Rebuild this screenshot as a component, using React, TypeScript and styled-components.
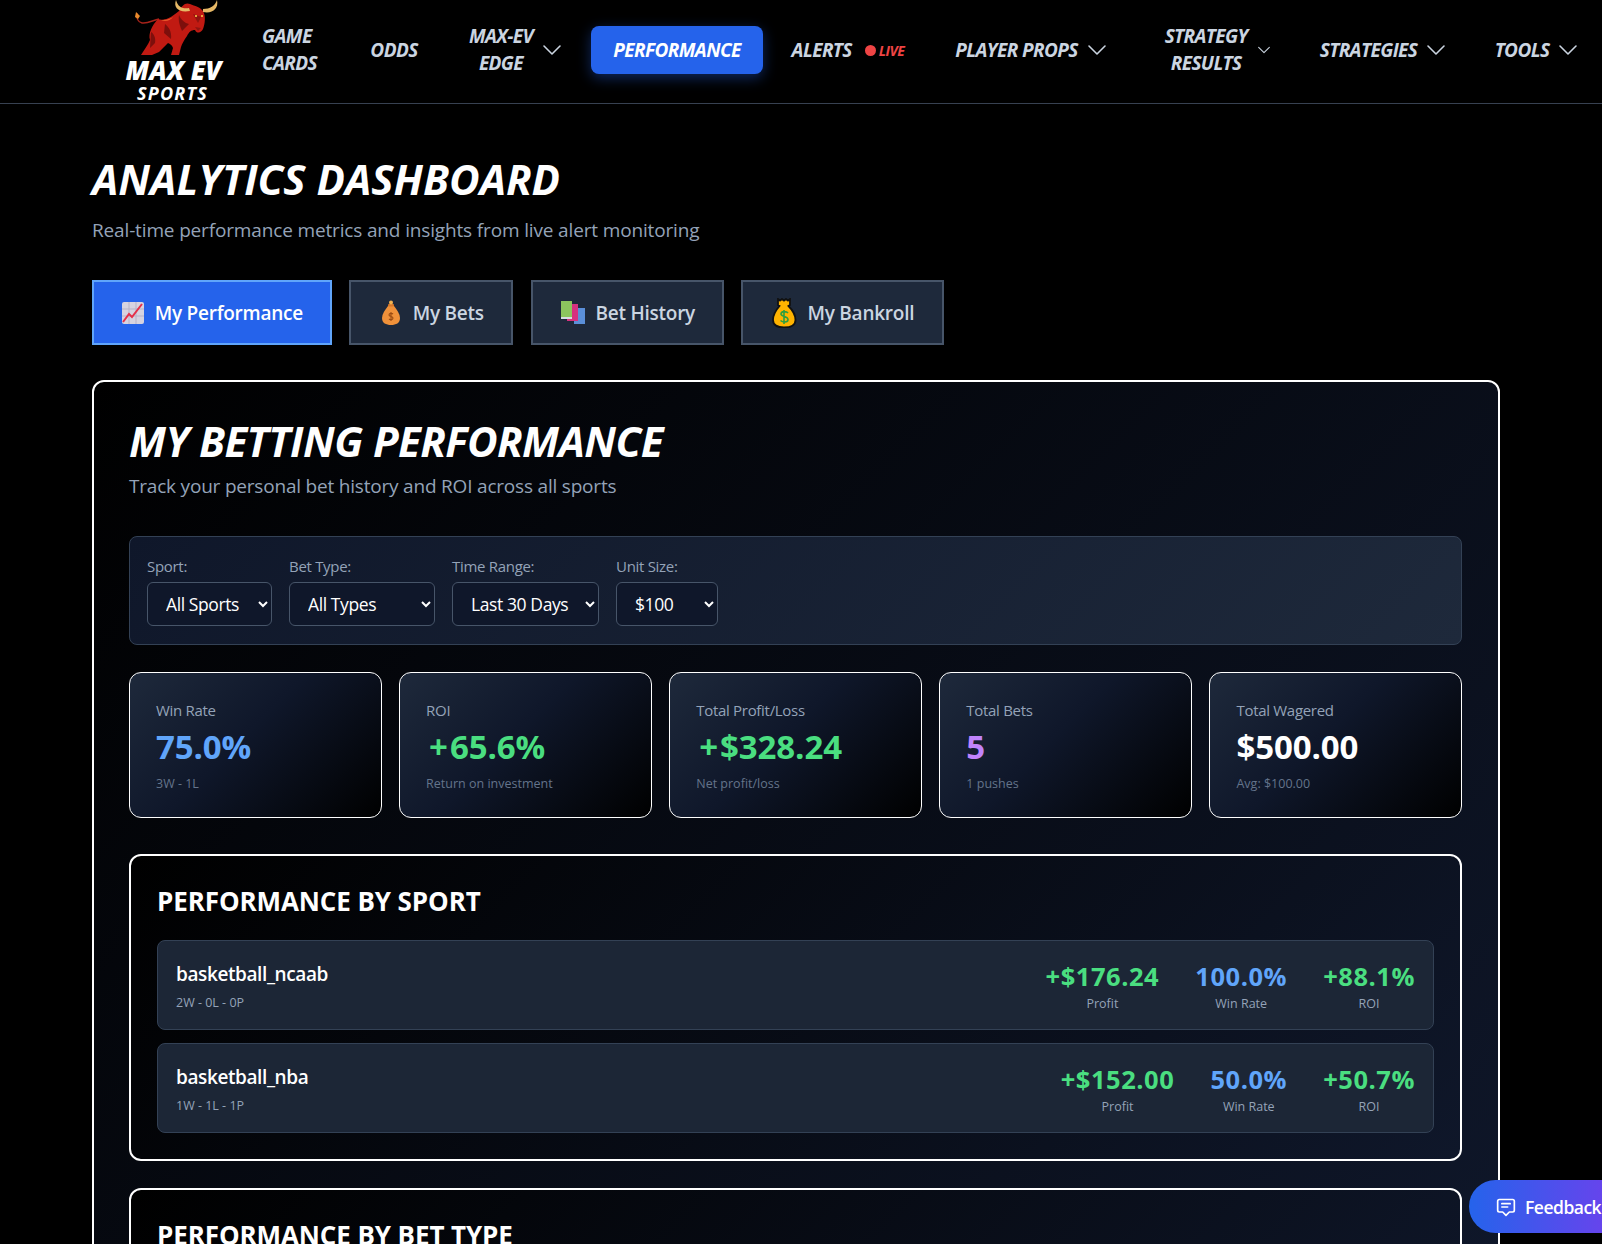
import styled, { createGlobalStyle } from 'styled-components';

const FONT = '"Open Sans", "Noto Sans", "Liberation Sans", sans-serif';

const GlobalStyle = createGlobalStyle`
  html, body {
    margin: 0;
    height: 1244px;
    overflow: hidden;
    background: #000;
    font-family: ${FONT};
    color: #fff;
  }
  * { box-sizing: border-box; }
`;

const Header = styled.header`
  height: 104px;
  border-bottom: 1px solid #374151;
  display: flex;
  align-items: center;
  padding-left: 126px;
  overflow: hidden;
`;

const Logo = styled.div`
  width: 100px;
  height: 103px;
  display: flex;
  flex-direction: column;
  align-items: center;
  margin-right: 14px;
  flex: none;
`;

const LogoMax = styled.div`
  margin: 3px 0 0 -5px;
  font-size: 26px;
  line-height: 22px;
  font-weight: 800;
  font-style: italic;
  white-space: nowrap;
`;

const LogoSports = styled.div`
  margin: 3px 0 0 -7px;
  font-size: 18px;
  line-height: 18px;
  font-weight: 700;
  font-style: italic;
  letter-spacing: 1.2px;
`;

const Nav = styled.nav`
  display: flex;
  align-items: center;
  padding-bottom: 3px;
`;

const NavItem = styled.a<{ $w: number; $left?: boolean }>`
  width: ${(p) => p.$w}px;
  flex: none;
  display: flex;
  align-items: center;
  justify-content: center;
  gap: 11px;
  color: #cbd5e1;
  font-size: 19px;
  line-height: 27px;
  font-weight: 700;
  font-style: italic;
  text-align: ${(p) => (p.$left ? 'left' : 'center')};
  letter-spacing: -0.6px;
`;

const ActiveNav = styled.a`
  width: 172px;
  height: 48px;
  margin-left: 11px;
  flex: none;
  display: flex;
  align-items: center;
  justify-content: center;
  background: #2563eb;
  border-radius: 8px;
  box-shadow: 0 4px 14px rgba(37, 99, 235, 0.4);
  color: #fff;
  font-size: 19px;
  font-weight: 700;
  font-style: italic;
  letter-spacing: -0.6px;
`;

const LiveDot = styled.span`
  width: 11px;
  height: 11px;
  border-radius: 50%;
  background: #ef4444;
  margin-left: 2px;
  margin-right: -8px;
`;

const LiveText = styled.span`
  color: #ef4444;
  font-size: 14px;
  letter-spacing: -0.5px;
`;

const Page = styled.main`
  width: 1500px;
  padding: 50px 0 0 92px;
`;

const PageTitle = styled.h1`
  margin: 0;
  font-size: 42px;
  line-height: 50px;
  font-weight: 700;
  font-style: italic;
  letter-spacing: 0;
`;

const PageSub = styled.p`
  margin: 12px 0 0;
  font-size: 19px;
  line-height: 28px;
  color: #94a3b8;
  letter-spacing: -0.15px;
`;

const Tabs = styled.div`
  display: flex;
  gap: 17.6px;
  margin-top: 36px;
`;

const Tab = styled.button<{ $active?: boolean; $w: number }>`
  width: ${(p) => p.$w}px;
  height: 65px;
  display: flex;
  align-items: center;
  justify-content: center;
  gap: 10px;
  font-family: ${FONT};
  font-size: 19px;
  font-weight: 600;
  letter-spacing: -0.25px;
  color: ${(p) => (p.$active ? '#fff' : '#cbd5e1')};
  background: ${(p) => (p.$active ? '#2563eb' : '#1e293b')};
  border: 2px solid ${(p) => (p.$active ? '#60a5fa' : '#475569')};
  padding: 0;
`;

const Card = styled.section`
  margin-top: 35px;
  width: 1408px;
  height: 900px;
  border: 2px solid #fff;
  border-radius: 12px;
  padding: 34px 36px 34px 35px;
  background: linear-gradient(135deg, #000 0%, #0f172a 100%);
`;

const CardTitle = styled.h2`
  margin: 0;
  font-size: 42px;
  line-height: 50px;
  font-weight: 700;
  font-style: italic;
  letter-spacing: -0.55px;
`;

const CardSub = styled.p`
  margin: 6px 0 0;
  font-size: 19px;
  line-height: 28px;
  color: #94a3b8;
  letter-spacing: -0.2px;
`;

const Filters = styled.div`
  margin-top: 36px;
  height: 108.5px;
  display: flex;
  gap: 17px;
  padding: 18px 17px;
  border: 1px solid #334155;
  border-radius: 8px;
  background: linear-gradient(135deg, #0f172a 0%, #1e293b 100%);
`;

const Filter = styled.label`
  display: flex;
  flex-direction: column;
  gap: 5px;
  font-size: 15px;
  line-height: 22px;
  color: #94a3b8;
  letter-spacing: -0.3px;
`;

const Select = styled.select<{ $w: number }>`
  width: ${(p) => p.$w}px;
  height: 45px;
  padding: 1px 3px 0 14px;
  background: #0f172a;
  border: 1px solid #475569;
  border-radius: 6px;
  color: #fff;
  font-family: ${FONT};
  font-size: 17.5px;
  letter-spacing: -0.4px;
`;

const Stats = styled.div`
  margin-top: 27px;
  display: grid;
  grid-template-columns: repeat(5, 1fr);
  gap: 17.6px;
`;

const Stat = styled.div`
  height: 146.5px;
  border: 1px solid #fff;
  border-radius: 12px;
  padding: 26px 26px;
  background: linear-gradient(135deg, #1e293b 0%, #0f172a 45%, #000 100%);
`;

const StatLabel = styled.div`
  font-size: 15px;
  line-height: 22px;
  color: #94a3b8;
  letter-spacing: -0.3px;
`;

const StatValue = styled.div<{ $color: string }>`
  margin-top: 3px;
  font-size: 33px;
  line-height: 46px;
  font-weight: 700;
  color: ${(p) => p.$color};
  letter-spacing: -0.1px;
`;

const Plus = styled.span`
  margin: 0 2px 0 3px;
`;

const StatNote = styled.div`
  margin-top: 5px;
  font-size: 12.5px;
  line-height: 18px;
  color: #64748b;
`;

const Section = styled.div<{ $h: number; $mt: number }>`
  margin-top: ${(p) => p.$mt}px;
  height: ${(p) => p.$h}px;
  border: 2px solid #fff;
  border-radius: 12px;
  padding: 27px 26px;
  background: linear-gradient(135deg, #000 0%, #0f172a 100%);
`;

const SectionTitle = styled.h3`
  margin: 0;
  font-size: 26px;
  line-height: 36px;
  font-weight: 700;
  letter-spacing: -0.1px;
`;

const Rows = styled.div`
  margin-top: 21px;
  display: flex;
  flex-direction: column;
  gap: 13px;
`;

const Row = styled.div`
  height: 90px;
  display: flex;
  align-items: center;
  justify-content: space-between;
  padding: 3px 18px 0;
  background: #1c2636;
  border: 1px solid #334155;
  border-radius: 8px;
`;

const RowName = styled.div`
  font-size: 19px;
  line-height: 28px;
  font-weight: 600;
  letter-spacing: -0.4px;
`;

const RowRecord = styled.div`
  margin-top: 6.5px;
  font-size: 12.5px;
  line-height: 18px;
  color: #94a3b8;
`;

const Metrics = styled.div`
  display: flex;
  gap: 36px;
`;

const Metric = styled.div`
  text-align: center;
`;

const MetricValue = styled.div<{ $color: string }>`
  font-size: 25.5px;
  line-height: 32px;
  font-weight: 700;
  color: ${(p) => p.$color};
  letter-spacing: 0.55px;
`;

const MetricLabel = styled.div`
  margin-top: 3px;
  font-size: 12.5px;
  line-height: 18px;
  color: #94a3b8;
`;

const Feedback = styled.button`
  position: fixed;
  left: 1469px;
  top: 1180px;
  width: 180px;
  height: 53px;
  display: flex;
  align-items: center;
  gap: 9px;
  padding: 0 0 0 27px;
  border: none;
  border-radius: 27px;
  background: linear-gradient(90deg, #2563eb 0%, #7c3aed 100%);
  color: #fff;
  font-family: ${FONT};
  font-size: 17.5px;
  font-weight: 600;
  letter-spacing: -0.5px;
`;

function Chevron({ size = 24 }: { size?: number }) {
  return (
    <svg width={size} height={size} viewBox="0 0 24 24" fill="none" stroke="#cbd5e1" strokeWidth="1.6" strokeLinecap="round" strokeLinejoin="round" style={{ flex: 'none', margin: `0 ${-size / 6}px` }}>
      <path d="m4 8 8 8 8-8" />
    </svg>
  );
}

function Bull() {
  return (
    <svg width="84" height="56" viewBox="0 0 84 56" style={{ display: 'block', flex: 'none', marginLeft: 2 }}>
      <path d="M2 13c-1 5 1 9 5 10 6 1 11-3 17-4" fill="none" stroke="#a8231a" strokeWidth="1.5" />
      <path d="M1 12l-1 5 3 2 2-3z" fill="#e8892b" />
      <path d="M23 19C30 22 38 16 44 11 47 6 50 2 55 4c5 2 10 3 13 7 3 5 2 13 0 18-2 4-6 5-8 1-4 0-6 2-8 6-3 4-5 8-6 11l-2 8h-8l2-7c-1-3-3-4-5-5l-9 9-7 3H6c3-5 7-10 9-15-2-6 2-15 8-21z" fill="#c11a12" />
      <path d="M30 24c4 3 7 8 6 15l-7-6zM44 15c2 5 6 8 10 9l-7 7c-2-5-4-10-3-16zM16 32c3 2 5 6 4 11l-5 5z" fill="#7d0f0c" />
      <path d="M58 14l8 3-3 6zM60 27l6 1-3 3z" fill="#8f1410" />
      <path d="M38 17c-5 3-9 3-12 3 4 2 9 1 12-3z" fill="#e8592b" />
      <path d="M41 0C38 8 44 13 55 11L54 8C47 9 43 7 41 0zM82 0c2 9-5 14-14 12V9c7 0 12-3 14-9z" fill="#e6b866" />
      <circle cx="61" cy="16" r="1" fill="#fcd34d" />
      <circle cx="67" cy="16" r="1" fill="#fcd34d" />
    </svg>
  );
}

function ChartIcon() {
  return (
    <svg width="24" height="24" viewBox="0 0 24 24">
      <rect x="1" y="1" width="22" height="22" rx="2" fill="#d6d3e0" />
      <path d="M8 1v22M15 1v22M1 8h22M1 15h22" stroke="#b7b2c8" strokeWidth="1" />
      <path d="M2 21l6-8 3 3 10-13" fill="none" stroke="#e5304a" strokeWidth="2" />
    </svg>
  );
}

function BagIcon() {
  return (
    <svg width="24" height="26" viewBox="0 0 24 26">
      <path d="M9 6h6c3 4 6 8 6 12 0 5-4 7-9 7s-9-2-9-7c0-4 3-8 6-12z" fill="#f0913a" />
      <rect x="9" y="4" width="6" height="2.5" rx="1" fill="#d9782a" />
      <circle cx="12" cy="2.4" r="2" fill="#f4b24f" />
      <path d="M14 14c-1-1-4-1-4 1s4 1 4 3-3 2-4 1M12 12v9" fill="none" stroke="#9a4b12" strokeWidth="1.1" />
    </svg>
  );
}

function BooksIcon() {
  return (
    <svg width="26" height="24" viewBox="0 0 26 24">
      <rect x="14" y="7" width="11" height="16" fill="#5b8fd9" />
      <rect x="7" y="3" width="11" height="17" fill="#d6317f" />
      <rect x="1" y="0" width="11" height="17" fill="#8cc55e" />
      <rect x="1" y="16" width="11" height="2" fill="#d7dde4" />
    </svg>
  );
}

function GoldBagIcon() {
  return (
    <svg width="26" height="30" viewBox="0 0 26 30">
      <path d="M7 1l2 1.5L11 1l2 1.5L15 1l2 1.5L19 1v6l-1.5 1c4 4 7 9 7 14 0 5-5 7.5-11.5 7.5S2 27 2 22c0-5 3-10 6.5-14L7 7z" fill="#ffb300" stroke="#111" strokeWidth="1.8" />
      <path d="M17 15c-1.500-2-7-2-7 1s7 2 7 5.500-5.500 3-7.500 1M13 12v14" fill="none" stroke="#2e9e3f" strokeWidth="1.6" />
    </svg>
  );
}

function FeedbackIcon() {
  return (
    <svg width="20" height="20" viewBox="0 0 24 24" fill="none" stroke="#fff" strokeWidth="2" strokeLinecap="round" strokeLinejoin="round">
      <path d="M4 3h16a2 2 0 0 1 2 2v11a2 2 0 0 1-2 2h-4l-4 4-4-4H4a2 2 0 0 1-2-2V5a2 2 0 0 1 2-2z" />
      <path d="M7 8h10M7 12h7" />
    </svg>
  );
}

const GREEN = '#4ade80';
const BLUE = '#60a5fa';

const stats = [
  { label: 'Win Rate', value: '75.0%', color: BLUE, note: '3W - 1L' },
  { label: 'ROI', value: '+65.6%', color: GREEN, note: 'Return on investment' },
  { label: 'Total Profit/Loss', value: '+$328.24', color: GREEN, note: 'Net profit/loss' },
  { label: 'Total Bets', value: '5', color: '#c084fc', note: '1 pushes' },
  { label: 'Total Wagered', value: '$500.00', color: '#fff', note: 'Avg: $100.00' },
];

const sports = [
  { name: 'basketball_ncaab', record: '2W - 0L - 0P', profit: '+$176.24', win: '100.0%', roi: '+88.1%' },
  { name: 'basketball_nba', record: '1W - 1L - 1P', profit: '+$152.00', win: '50.0%', roi: '+50.7%' },
];

export default function App() {
  return (
    <>
      <GlobalStyle />
      <Header>
        <Logo>
          <Bull />
          <LogoMax>MAX EV</LogoMax>
          <LogoSports>SPORTS</LogoSports>
        </Logo>
        <Nav>
          <NavItem $w={99} $left>GAME<br />CARDS</NavItem>
          <NavItem $w={110}>ODDS</NavItem>
          <NavItem $w={131}><span>MAX-EV<br />EDGE</span><Chevron /></NavItem>
          <ActiveNav>PERFORMANCE</ActiveNav>
          <NavItem $w={170}>ALERTS<LiveDot /><LiveText>LIVE</LiveText></NavItem>
          <NavItem $w={194}>PLAYER PROPS<Chevron /></NavItem>
          <NavItem $w={180}><span>STRATEGY<br />RESULTS</span><Chevron size={16} /></NavItem>
          <NavItem $w={150}>STRATEGIES<Chevron /></NavItem>
          <NavItem $w={157}>TOOLS<Chevron /></NavItem>
        </Nav>
      </Header>
      <Page>
        <PageTitle>ANALYTICS DASHBOARD</PageTitle>
        <PageSub>Real-time performance metrics and insights from live alert monitoring</PageSub>
        <Tabs>
          <Tab $active $w={239.6}><ChartIcon />My Performance</Tab>
          <Tab $w={164}><BagIcon />My Bets</Tab>
          <Tab $w={193}><BooksIcon />Bet History</Tab>
          <Tab $w={203}><GoldBagIcon />My Bankroll</Tab>
        </Tabs>
        <Card>
          <CardTitle>MY BETTING PERFORMANCE</CardTitle>
          <CardSub>Track your personal bet history and ROI across all sports</CardSub>
          <Filters>
            <Filter>Sport:<Select $w={125}><option>All Sports</option></Select></Filter>
            <Filter>Bet Type:<Select $w={146}><option>All Types</option></Select></Filter>
            <Filter>Time Range:<Select $w={147}><option>Last 30 Days</option></Select></Filter>
            <Filter>Unit Size:<Select $w={102}><option>$100</option></Select></Filter>
          </Filters>
          <Stats>
            {stats.map((s) => (
              <Stat key={s.label}>
                <StatLabel>{s.label}</StatLabel>
                <StatValue $color={s.color}>
                  {s.value.startsWith('+') ? <><Plus>+</Plus>{s.value.slice(1)}</> : s.value}
                </StatValue>
                <StatNote>{s.note}</StatNote>
              </Stat>
            ))}
          </Stats>
          <Section $mt={35.5} $h={307}>
            <SectionTitle>PERFORMANCE BY SPORT</SectionTitle>
            <Rows>
              {sports.map((s) => (
                <Row key={s.name}>
                  <div>
                    <RowName>{s.name}</RowName>
                    <RowRecord>{s.record}</RowRecord>
                  </div>
                  <Metrics>
                    <Metric><MetricValue $color={GREEN}>{s.profit}</MetricValue><MetricLabel>Profit</MetricLabel></Metric>
                    <Metric><MetricValue $color={BLUE}>{s.win}</MetricValue><MetricLabel>Win Rate</MetricLabel></Metric>
                    <Metric><MetricValue $color={GREEN}>{s.roi}</MetricValue><MetricLabel>ROI</MetricLabel></Metric>
                  </Metrics>
                </Row>
              ))}
            </Rows>
          </Section>
          <Section $mt={27} $h={200}>
            <SectionTitle>PERFORMANCE BY BET TYPE</SectionTitle>
          </Section>
        </Card>
      </Page>
      <Feedback><FeedbackIcon />Feedback</Feedback>
    </>
  );
}
